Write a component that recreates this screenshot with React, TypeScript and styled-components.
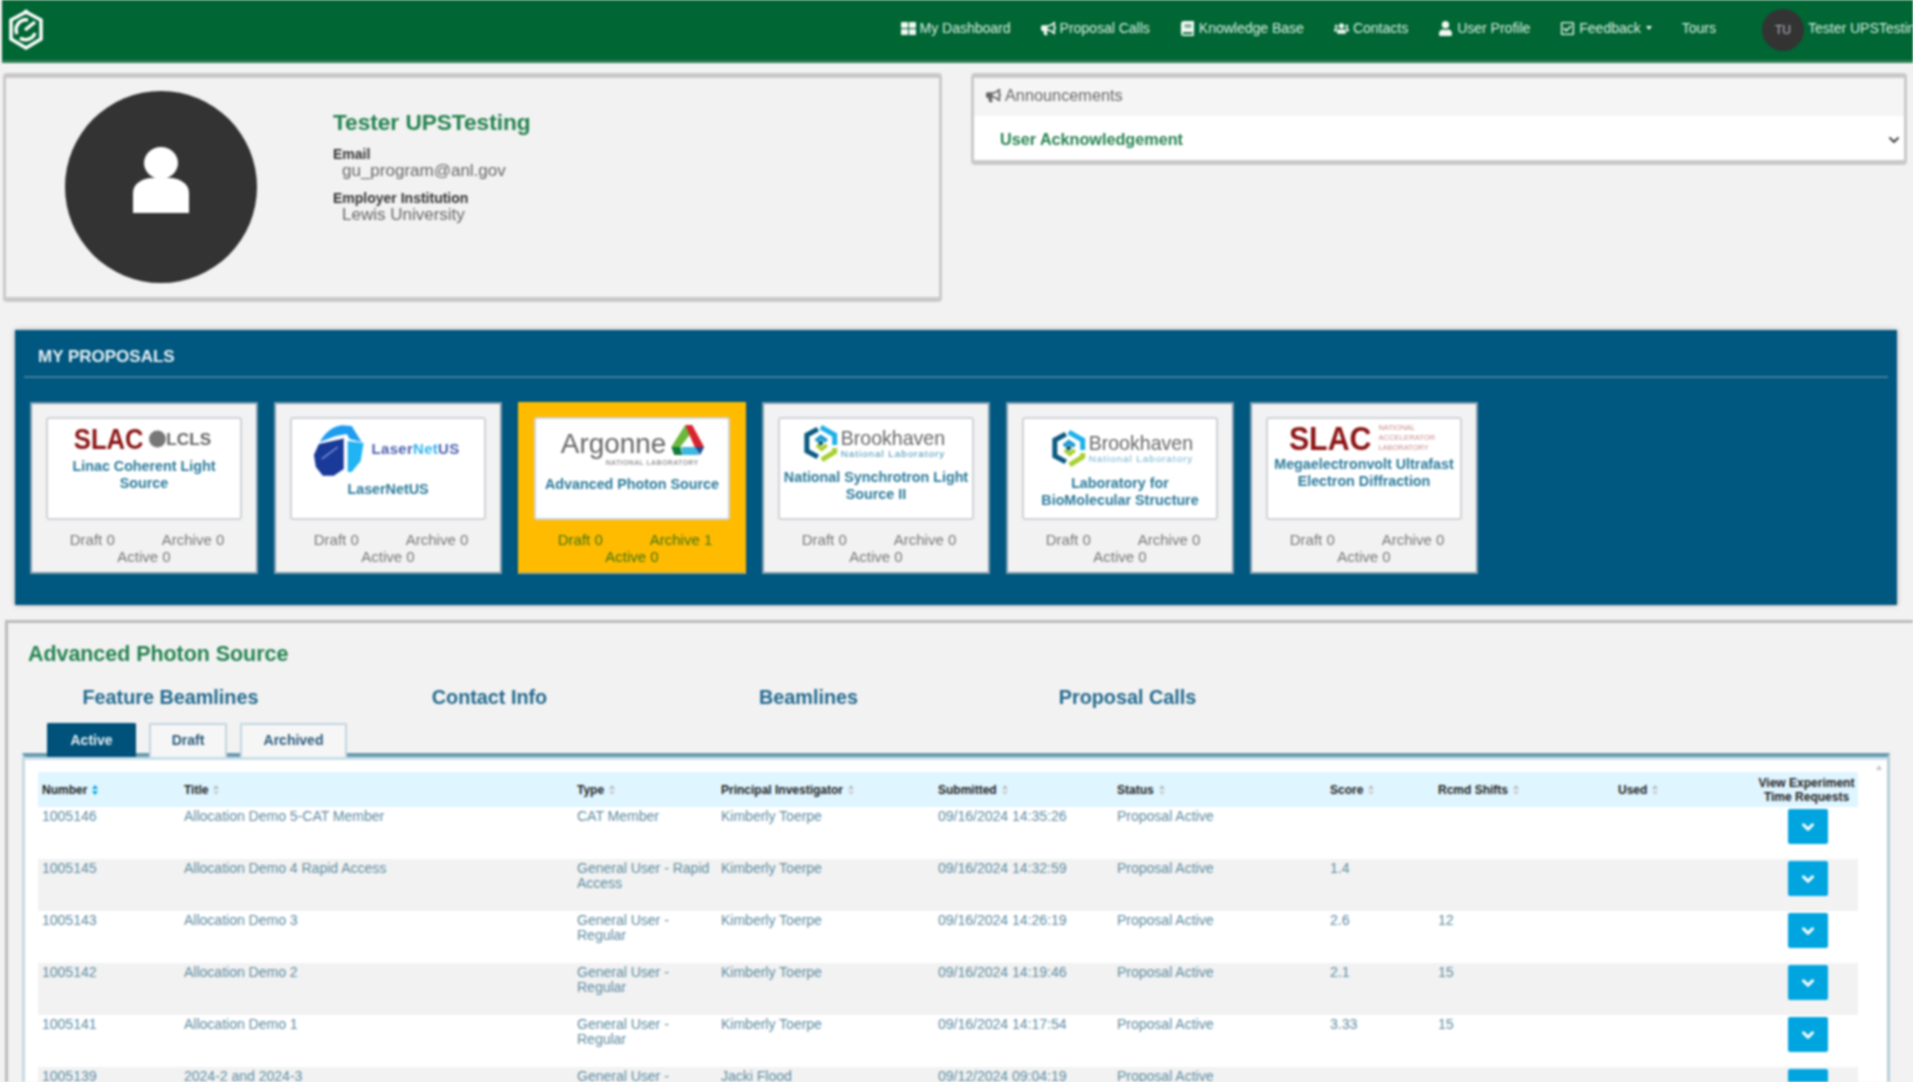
import * as React from 'react';
import styled, { createGlobalStyle } from 'styled-components';
import { FaBook, FaBullhorn, FaRegCheckSquare, FaThLarge, FaUser, FaUsers } from 'react-icons/fa';
import { ChevronDown } from 'lucide-react';

const GlobalStyle = createGlobalStyle`
  html, body {
    margin: 0;
    height: 100%;
    overflow: hidden;
    background: #f2f2f2;
    font-family: "Liberation Sans", Arial, sans-serif;
  }
  #root {
    height: 100%;
  }
`;

const Page = styled.div`
  display: flex;
  flex-direction: column;
  height: 100vh;
  padding-left: 2px;
  box-sizing: border-box;
  filter: blur(0.9px);
`;

const Navbar = styled.nav`
  flex: none;
  display: flex;
  align-items: center;
  justify-content: space-between;
  height: 60px;
  padding-left: 6px;
  background: #006633;
  border-bottom: 3px solid #2f8055;
`;

const NavLinks = styled.div`
  display: flex;
  align-items: center;
  height: 100%;
  overflow: hidden;
`;

const NavLink = styled.a<{ $gap: number }>`
  display: flex;
  align-items: center;
  gap: 4px;
  margin-right: ${p => p.$gap}px;
  padding-bottom: 4px;
  font-size: 14px;
  color: #d9ebe0;
  white-space: nowrap;
`;

const NavIcon = styled.span`
  display: flex;
  color: #f0f6f2;
  font-size: 15px;
`;

const Caret = styled.span`
  width: 0;
  height: 0;
  margin-left: 1px;
  border-left: 3px solid transparent;
  border-right: 3px solid transparent;
  border-top: 4px solid #f0f6f2;
`;

const NavAvatar = styled.div`
  flex: none;
  display: flex;
  align-items: center;
  justify-content: center;
  width: 42px;
  height: 42px;
  border-radius: 50%;
  background: #333;
  color: #b3b3c4;
  font-size: 12px;
`;

const NavUser = styled.span`
  width: 105px;
  margin-left: 4px;
  padding-bottom: 4px;
  font-size: 14px;
  color: #d9ebe0;
  white-space: nowrap;
  overflow: hidden;
`;

const TopRow = styled.div`
  flex: none;
  display: flex;
  align-items: flex-start;
  padding: 10px 6px 0 1px;
`;

const ProfileCard = styled.section`
  display: flex;
  flex: none;
  width: 939px;
  height: 229px;
  box-sizing: border-box;
  background: #f2f2f2;
  border: solid #c9c9c9;
  border-width: 5px 3px;
  border-radius: 4px;
`;

const Avatar = styled.div`
  flex: none;
  display: flex;
  align-items: center;
  justify-content: center;
  width: 192px;
  height: 192px;
  margin: 13px 0 0 59px;
  padding-bottom: 14px;
  box-sizing: border-box;
  border-radius: 50%;
  background: #333;
`;

const ProfileInfo = styled.div`
  margin: 32px 0 0 76px;
`;

const UserName = styled.h2`
  margin: 0 0 10px;
  font-size: 22.6px;
  line-height: 26px;
  color: #23824e;
`;

const FieldLabel = styled.div`
  font-size: 14px;
  font-weight: bold;
  line-height: 16px;
  color: #333;
`;

const FieldValue = styled.div`
  margin: 0 0 10px 9px;
  font-size: 17px;
  line-height: 18px;
  color: #666;
`;

const AnnouncementCard = styled.section`
  flex: 1;
  height: 92px;
  margin-left: 29px;
  box-sizing: border-box;
  background: #fff;
  border: solid #c9c9c9;
  border-width: 5px 3px;
  border-radius: 4px;
  overflow: hidden;
`;

const AnnouncementHead = styled.div`
  display: flex;
  align-items: center;
  gap: 4px;
  height: 38px;
  padding: 0 0 4px 12px;
  box-sizing: border-box;
  background: #f5f5f5;
  font-size: 16.3px;
  color: #666;
`;

const AnnouncementBody = styled.div`
  display: flex;
  align-items: center;
  justify-content: space-between;
  height: 44px;
  padding: 3px 2px 0 26px;
  box-sizing: border-box;
  font-size: 16.2px;
  font-weight: bold;
  color: #23824e;
`;

const ProposalsPanel = styled.section`
  flex: none;
  height: 275px;
  margin: 28px 16px 0 13px;
  padding-top: 17px;
  box-sizing: border-box;
  background: #00577f;
  box-shadow: 0 0 5px rgba(0, 0, 0, 0.3);
`;

const PanelTitle = styled.h3`
  margin: 0 0 9px 23px;
  font-size: 17px;
  line-height: 20px;
  color: #e6f0f5;
`;

const PanelRule = styled.hr`
  height: 2px;
  margin: 0 9px 24px;
  border: 0;
  background: #3f7f9c;
`;

const FacilityRow = styled.div`
  display: flex;
  gap: 16px;
  margin-left: 15px;
`;

const FacilityCard = styled.div<{ $selected?: boolean }>`
  width: 228px;
  height: 172px;
  padding: 13px 14px;
  box-sizing: border-box;
  background: ${p => (p.$selected ? '#ffbb00' : '#f2f2f2')};
  border: solid ${p => (p.$selected ? '#ffbb00' : '#7f9bac')};
  border-width: 2px;
  border-bottom-color: ${p => (p.$selected ? '#a9ab7a' : '#7f9bac')};
`;

const FacilityBox = styled.div`
  height: 103px;
  box-sizing: border-box;
  background: #fff;
  border: 2px solid #cfd2d8;
  border-radius: 3px;
  text-align: center;
`;

const LogoSvg = styled.svg`
  display: block;
  width: 100%;
`;

const FacilityName = styled.div`
  font-size: 14.3px;
  font-weight: bold;
  line-height: 17px;
  color: #2a7a9a;
`;

const Counts = styled.div<{ $selected?: boolean }>`
  margin-top: 11px;
  font-size: 15px;
  line-height: 17px;
  text-align: center;
  color: ${p => (p.$selected ? '#3f7510' : '#777')};
`;

const CountRow = styled.div`
  display: flex;
  justify-content: center;
  gap: 47px;
  padding-left: 6px;
`;

const MainPanel = styled.section`
  flex: 1;
  min-height: 0;
  margin: 15px 0 0 3px;
  padding-top: 18px;
  background: #f2f2f2;
  border: solid #bbb;
  border-width: 3px 0 0 3px;
  overflow: hidden;
`;

const MainTitle = styled.h2`
  margin: 0 0 18px 20px;
  font-size: 21.4px;
  line-height: 26px;
  color: #23824e;
`;

const LinkGrid = styled.div`
  display: grid;
  grid-template-columns: repeat(4, 319px);
  margin-left: 3px;
`;

const SectionLink = styled.a`
  font-size: 19.8px;
  font-weight: bold;
  line-height: 24px;
  text-align: center;
  color: #226a8f;
`;

const TabBar = styled.div`
  position: relative;
  z-index: 1;
  display: flex;
  gap: 13px;
  margin: 14px 0 -4px 39px;
`;

const Tab = styled.a<{ $active?: boolean; $width: number }>`
  width: ${p => p.$width}px;
  height: 34px;
  box-sizing: border-box;
  font-size: 14px;
  font-weight: bold;
  line-height: 30px;
  text-align: center;
  color: ${p => (p.$active ? '#e6f0f5' : '#2a5a7a')};
  background: ${p => (p.$active ? '#00527a' : '#f6f6f6')};
  border: 2px solid ${p => (p.$active ? '#00527a' : '#c3d5e0')};
  border-bottom: 0;
  border-radius: 2px 2px 0 0;
`;

const TableFrame = styled.div`
  position: relative;
  height: 100%;
  margin: 0 23px 0 14px;
  padding: 15px 0 0 13px;
  box-sizing: border-box;
  background: #fff;
  border-top: 4px solid #6a9ab0;
  border-left: 3px solid #c5dae3;
  border-right: 3px solid #b8cfda;
  box-shadow: inset 0 3px 0 #c9dfe8;
`;

const ScrollArrow = styled.span`
  position: absolute;
  top: 8px;
  right: 5px;
  width: 0;
  height: 0;
  border-left: 3px solid transparent;
  border-right: 3px solid transparent;
  border-bottom: 5px solid #c4c4c4;
`;

const Table = styled.table`
  width: 1820px;
  table-layout: fixed;
  border-collapse: collapse;
`;

const Col = styled.col<{ $width: number }>`
  width: ${p => p.$width}px;
`;

const HeadRow = styled.tr`
  height: 35px;
  background: #dff5ff;
`;

const HeadCell = styled.th<{ $center?: boolean }>`
  padding: 0 3px 0 4px;
  font-size: 12px;
  line-height: 14px;
  text-align: ${p => (p.$center ? 'center' : 'left')};
  color: #222;
`;

const SortMark = styled.svg`
  margin-left: 5px;
  vertical-align: -1px;
`;

const BodyRow = styled.tr<{ $shaded: boolean }>`
  height: 52px;
  background: ${p => (p.$shaded ? '#f2f2f2' : '#fff')};
`;

const Cell = styled.td`
  padding: 2px 3px 0 4px;
  vertical-align: top;
  font-size: 14px;
  line-height: 15px;
  color: #5f8ea3;
`;

const ActionCell = styled(Cell)`
  padding: 2px 0 0 3px;
  text-align: center;
`;

const ExpandButton = styled.button`
  display: inline-flex;
  align-items: center;
  justify-content: center;
  width: 40px;
  height: 35px;
  padding: 0;
  background: #00a5e0;
  border: 0;
  border-radius: 2px;
  color: #fff;
`;

const SlacMark = ({ x, y, size, width }: { x: number; y: number; size: number; width: number }) => (
  <text x={x} y={y} fontSize={size} fontWeight="bold" fill="#8c1515" textLength={width} lengthAdjust="spacingAndGlyphs">
    SLAC
  </text>
);

const HexMark = () => (
  <g fill="none" strokeWidth="5">
    <path d="M0 -16 L14 -8 V2" stroke="#1cb0e8" />
    <path d="M-3 -14 L-14 -8 V8 L-3 14" stroke="#0a5a80" />
    <path d="M14 5 V9 L1 17" stroke="#a8d030" />
    <path d="M-5 -2 L0 -6 L6 -2" stroke="#1c9ad0" strokeWidth="4" />
    <path d="M-4 2 L1 6 L6 2" stroke="#a8d030" strokeWidth="4" />
    <circle r="2.5" fill="#0a5a80" stroke="none" />
  </g>
);

const LclsLogo = () => (
  <LogoSvg height="39" viewBox="0 0 193 39" fontFamily="Liberation Sans, sans-serif">
    <SlacMark x={26} y={30} size={29} width={70} />
    <circle cx="110" cy="20" r="8.5" fill="#777" />
    <text x="119" y="26" fontSize="16" fontWeight="bold" fill="#666" textLength="45" lengthAdjust="spacingAndGlyphs">LCLS</text>
  </LogoSvg>
);

const LaserNetLogo = () => (
  <LogoSvg height="62" viewBox="0 0 193 62" fontFamily="Liberation Sans, sans-serif">
    <path d="M22 36 L27 25 L50 20 L52 19 L52 50 L42 57 L31 57 L24 48 Z" fill="#1a3a9a" />
    <path d="M30 40 L46 28" stroke="#7f93d6" strokeWidth="1.5" />
    <path d="M28 23 Q36 8 50 6 L60 7 L70 23 L58 20 L55 15 L44 17 Z" fill="#1e9cf0" />
    <path d="M56 22 L72 24 L69 42 L60 53 L56 53 Z" fill="#20b4f4" />
    <text x="80" y="35" fontSize="15" fontWeight="bold" fill="#4a5fb0" textLength="88">
      Laser<tspan fill="#33b5f0">Net</tspan>US
    </text>
  </LogoSvg>
);

const ArgonneLogo = () => (
  <LogoSvg height="57" viewBox="0 0 193 57" fontFamily="Liberation Sans, sans-serif">
    <text x="25" y="34" fontSize="28" fill="#666">Argonne</text>
    <text x="70" y="46" fontSize="7" fontWeight="bold" fill="#999" textLength="93">NATIONAL LABORATORY</text>
    <path d="M150 6 L156 14 L145 28 L136 28 Z" fill="#6cb83c" />
    <path d="M150 6 L157 6 L169 28 L160 29 Z" fill="#d8232e" />
    <path d="M136 28 L145 28 L147 36 L139 36 Z" fill="#0f7a3c" />
    <path d="M146 28 H161 L164 36 H147 Z" fill="#40b8e0" />
    <path d="M160 28 H169 L165 36 Z" fill="#1f4a90" />
  </LogoSvg>
);

const BrookhavenLogo = ({ height, x, y, sub }: { height: number; x: number; y: number; sub: string }) => (
  <LogoSvg height={height} viewBox={`0 0 193 ${height}`} fontFamily="Liberation Sans, sans-serif">
    <g transform={`translate(${x} ${y})`}>
      <HexMark />
      <text x="20" y="2" fontSize="19.5" fill="#666" textLength="105" lengthAdjust="spacingAndGlyphs">Brookhaven</text>
      <text x="20" y="14" fontSize="10" fill={sub} textLength="104">National Laboratory</text>
    </g>
  </LogoSvg>
);

const UedLogo = () => (
  <LogoSvg height="37" viewBox="0 0 193 37" fontFamily="Liberation Sans, sans-serif">
    <SlacMark x={21} y={31} size={34} width={83} />
    <g fontSize="7.5" fill="#c98a8a">
      <text x="111" y="11">NATIONAL</text>
      <text x="111" y="21" textLength="57">ACCELERATOR</text>
      <text x="111" y="31">LABORATORY</text>
    </g>
  </LogoSvg>
);

const facilities = [
  { name: <>Linac Coherent Light Source</>, logo: <LclsLogo />, archive: 0 },
  { name: <>LaserNetUS</>, logo: <LaserNetLogo />, archive: 0 },
  { name: <>Advanced Photon Source</>, logo: <ArgonneLogo />, archive: 1, selected: true },
  { name: <>National Synchrotron Light Source II</>, logo: <BrookhavenLogo height={50} x={41} y={24} sub="#3f8fb0" />, archive: 0 },
  { name: <>Laboratory for<br />BioMolecular Structure</>, logo: <BrookhavenLogo height={56} x={45} y={29} sub="#6fb3cf" />, archive: 0 },
  { name: <>Megaelectronvolt Ultrafast Electron Diffraction</>, logo: <UedLogo />, archive: 0 },
];

const columns = [
  { label: 'Number', width: 142, active: true },
  { label: 'Title', width: 393 },
  { label: 'Type', width: 144 },
  { label: 'Principal Investigator', width: 217 },
  { label: 'Submitted', width: 179 },
  { label: 'Status', width: 213 },
  { label: 'Score', width: 108 },
  { label: 'Rcmd Shifts', width: 180 },
  { label: 'Used', width: 140 },
];

const rows = [
  ['1005146', 'Allocation Demo 5-CAT Member', 'CAT Member', 'Kimberly Toerpe', '09/16/2024 14:35:26', 'Proposal Active', '', '', ''],
  ['1005145', 'Allocation Demo 4 Rapid Access', 'General User - Rapid Access', 'Kimberly Toerpe', '09/16/2024 14:32:59', 'Proposal Active', '1.4', '', ''],
  ['1005143', 'Allocation Demo 3', 'General User - Regular', 'Kimberly Toerpe', '09/16/2024 14:26:19', 'Proposal Active', '2.6', '12', ''],
  ['1005142', 'Allocation Demo 2', 'General User - Regular', 'Kimberly Toerpe', '09/16/2024 14:19:46', 'Proposal Active', '2.1', '15', ''],
  ['1005141', 'Allocation Demo 1', 'General User - Regular', 'Kimberly Toerpe', '09/16/2024 14:17:54', 'Proposal Active', '3.33', '15', ''],
  ['1005139', '2024-2 and 2024-3', 'General User - Regular', 'Jacki Flood', '09/12/2024 09:04:19', 'Proposal Active', '', '', ''],
];

const navItems = [
  { label: 'My Dashboard', icon: <FaThLarge /> },
  { label: 'Proposal Calls', icon: <FaBullhorn /> },
  { label: 'Knowledge Base', icon: <FaBook /> },
  { label: 'Contacts', icon: <FaUsers /> },
  { label: 'User Profile', icon: <FaUser /> },
];

const Sort = ({ active }: { active?: boolean }) => (
  <SortMark width="6" height="10" viewBox="0 0 6 10">
    <path d="M3 0 L6 4 H0 Z" fill={active ? '#00a5e0' : '#bbb'} />
    <path d="M3 10 L6 6 H0 Z" fill={active ? '#00a5e0' : '#ccc'} />
  </SortMark>
);

const HexLogo = () => (
  <svg width="36" height="42" viewBox="0 0 36 42" fill="none" stroke="#fff">
    <path d="M18 3 L33 11 V30 L18 39 L3 30 V11 Z" strokeWidth="3.5" />
    <path d="M9 25 A10 10 0 0 1 20 11" strokeWidth="3.5" />
    <path d="M17 21 L27 13 M12 29 A10 10 0 0 0 27 24" strokeWidth="3.5" />
    <circle cx="18" cy="3" r="2" fill="#fff" />
  </svg>
);

const AvatarFigure = () => (
  <svg width="56" height="66" viewBox="0 0 56 66" fill="#fff">
    <ellipse cx="28" cy="16" rx="17" ry="16" />
    <path d="M0 66 V46 C0 36 10 32 17 31 H39 C46 32 56 36 56 46 V66 Z" />
  </svg>
);

export default function App() {
  return (
    <Page>
      <GlobalStyle />
      <Navbar>
        <HexLogo />
        <NavLinks>
          {navItems.map(item => (
            <NavLink key={item.label} $gap={30}>
              <NavIcon>{item.icon}</NavIcon>
              {item.label}
            </NavLink>
          ))}
          <NavLink $gap={30}>
            <NavIcon><FaRegCheckSquare /></NavIcon>
            Feedback
            <Caret />
          </NavLink>
          <NavLink $gap={46}>Tours</NavLink>
          <NavAvatar>TU</NavAvatar>
          <NavUser>Tester UPSTesting</NavUser>
        </NavLinks>
      </Navbar>

      <TopRow>
        <ProfileCard>
          <Avatar><AvatarFigure /></Avatar>
          <ProfileInfo>
            <UserName>Tester UPSTesting</UserName>
            <FieldLabel>Email</FieldLabel>
            <FieldValue>gu_program@anl.gov</FieldValue>
            <FieldLabel>Employer Institution</FieldLabel>
            <FieldValue>Lewis University</FieldValue>
          </ProfileInfo>
        </ProfileCard>
        <AnnouncementCard>
          <AnnouncementHead><FaBullhorn size={15} />Announcements</AnnouncementHead>
          <AnnouncementBody>
            User Acknowledgement
            <ChevronDown size={16} color="#444" strokeWidth={3} />
          </AnnouncementBody>
        </AnnouncementCard>
      </TopRow>

      <ProposalsPanel>
        <PanelTitle>MY PROPOSALS</PanelTitle>
        <PanelRule />
        <FacilityRow>
          {facilities.map((f, i) => (
            <FacilityCard key={i} $selected={f.selected}>
              <FacilityBox>
                {f.logo}
                <FacilityName>{f.name}</FacilityName>
              </FacilityBox>
              <Counts $selected={f.selected}>
                <CountRow>
                  <span>Draft 0</span>
                  <span>Archive {f.archive}</span>
                </CountRow>
                Active 0
              </Counts>
            </FacilityCard>
          ))}
        </FacilityRow>
      </ProposalsPanel>

      <MainPanel>
        <MainTitle>Advanced Photon Source</MainTitle>
        <LinkGrid>
          <SectionLink>Feature Beamlines</SectionLink>
          <SectionLink>Contact Info</SectionLink>
          <SectionLink>Beamlines</SectionLink>
          <SectionLink>Proposal Calls</SectionLink>
        </LinkGrid>
        <TabBar>
          <Tab $active $width={89}>Active</Tab>
          <Tab $width={78}>Draft</Tab>
          <Tab $width={107}>Archived</Tab>
        </TabBar>
        <TableFrame>
          <ScrollArrow />
          <Table>
            <colgroup>
              {columns.map(c => <Col key={c.label} $width={c.width} />)}
              <Col $width={104} />
            </colgroup>
            <thead>
              <HeadRow>
                {columns.map(c => (
                  <HeadCell key={c.label}>{c.label}<Sort active={c.active} /></HeadCell>
                ))}
                <HeadCell $center>View Experiment Time Requests</HeadCell>
              </HeadRow>
            </thead>
            <tbody>
              {rows.map((row, i) => (
                <BodyRow key={row[0]} $shaded={i % 2 === 1}>
                  {row.map((value, j) => <Cell key={j}>{value}</Cell>)}
                  <ActionCell>
                    <ExpandButton><ChevronDown size={18} strokeWidth={4} /></ExpandButton>
                  </ActionCell>
                </BodyRow>
              ))}
            </tbody>
          </Table>
        </TableFrame>
      </MainPanel>
    </Page>
  );
}
